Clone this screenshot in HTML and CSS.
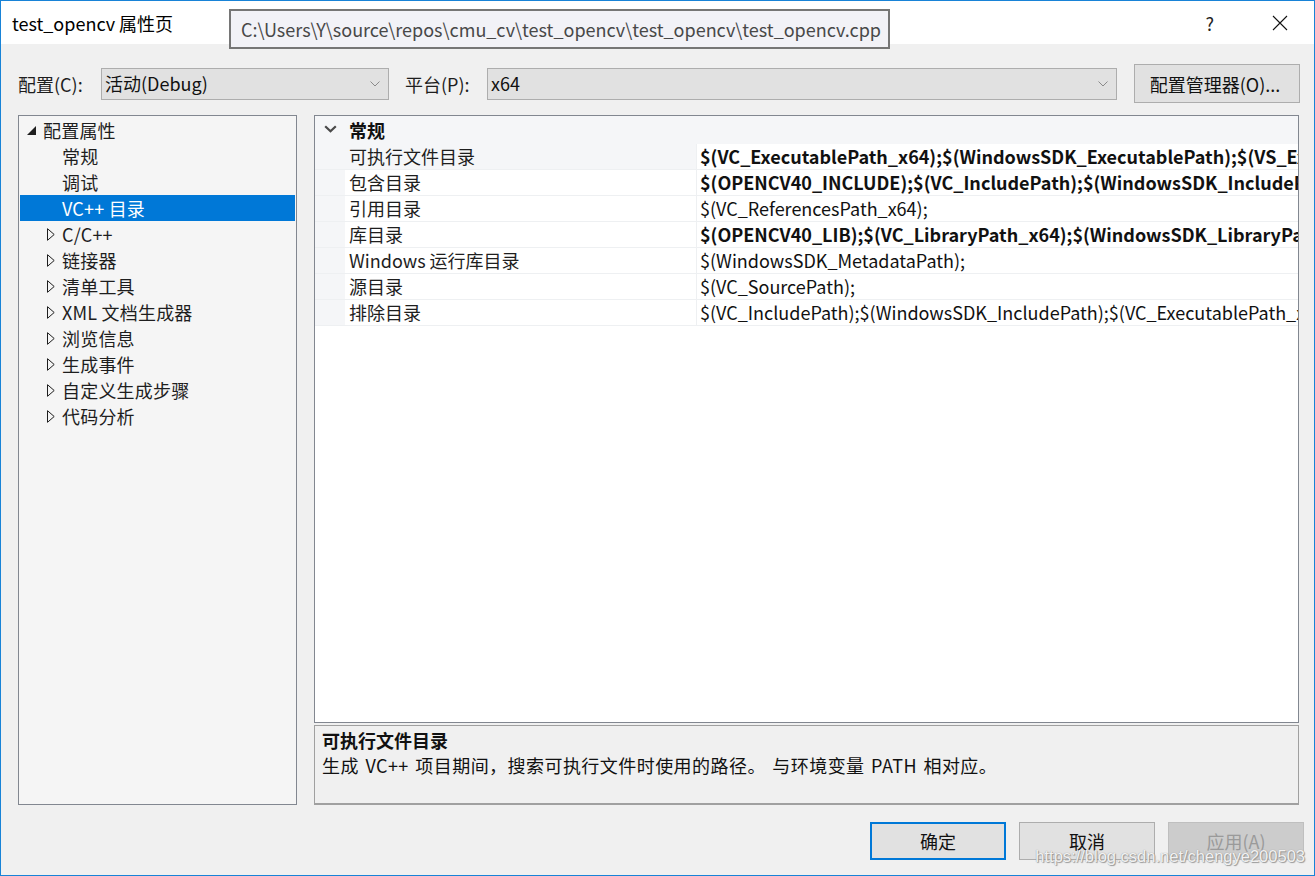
FILE: index.html
```html
<!DOCTYPE html>
<html lang="zh-CN">
<head>
<meta charset="utf-8">
<title>test_opencv 属性页</title>
<link rel="stylesheet" href="styles.css">
</head>
<body>
<div class="window">
  <div class="titlebar">
    <span class="title">test_opencv 属性页</span>
    <div class="tb-buttons">
      <span class="help">?</span>
      <svg class="close" width="16" height="16" viewBox="0 0 16 16"><path d="M1 1L15 15M15 1L1 15" stroke="#111" stroke-width="1.1" fill="none"/></svg>
    </div>
  </div>
  <div class="tooltip">C:\Users\Y\source\repos\cmu_cv\test_opencv\test_opencv\test_opencv.cpp</div>

  <div class="toolbar">
    <label class="lbl lbl-config">配置(C):</label>
    <div class="select sel-config"><span>活动(Debug)</span>
      <svg class="chev" width="10" height="6" viewBox="0 0 10 6"><path d="M0.5 0.5L5 5L9.5 0.5" stroke="#8a8a8a" stroke-width="1" fill="none"/></svg>
    </div>
    <label class="lbl lbl-platform">平台(P):</label>
    <div class="select sel-platform"><span>x64</span>
      <svg class="chev" width="10" height="6" viewBox="0 0 10 6"><path d="M0.5 0.5L5 5L9.5 0.5" stroke="#8a8a8a" stroke-width="1" fill="none"/></svg>
    </div>
    <button class="btn btn-manager">配置管理器(O)...</button>
  </div>

  <div class="main">
    <div class="tree">
      <div class="node root"><svg class="tri-open" width="9" height="9" viewBox="0 0 9 9"><path d="M9 0V9H0Z" fill="#1e1e1e"/></svg><span>配置属性</span></div>
      <div class="node leaf"><span>常规</span></div>
      <div class="node leaf"><span>调试</span></div>
      <div class="node leaf selected"><span>VC++ 目录</span></div>
      <div class="node branch"><svg class="tri" width="8" height="13" viewBox="0 0 8 13"><path d="M0.5 0.7V12.3L7.2 6.5Z" fill="none" stroke="#1e1e1e" stroke-width="1"/></svg><span>C/C++</span></div>
      <div class="node branch"><svg class="tri" width="8" height="13" viewBox="0 0 8 13"><path d="M0.5 0.7V12.3L7.2 6.5Z" fill="none" stroke="#1e1e1e" stroke-width="1"/></svg><span>链接器</span></div>
      <div class="node branch"><svg class="tri" width="8" height="13" viewBox="0 0 8 13"><path d="M0.5 0.7V12.3L7.2 6.5Z" fill="none" stroke="#1e1e1e" stroke-width="1"/></svg><span>清单工具</span></div>
      <div class="node branch"><svg class="tri" width="8" height="13" viewBox="0 0 8 13"><path d="M0.5 0.7V12.3L7.2 6.5Z" fill="none" stroke="#1e1e1e" stroke-width="1"/></svg><span>XML 文档生成器</span></div>
      <div class="node branch"><svg class="tri" width="8" height="13" viewBox="0 0 8 13"><path d="M0.5 0.7V12.3L7.2 6.5Z" fill="none" stroke="#1e1e1e" stroke-width="1"/></svg><span>浏览信息</span></div>
      <div class="node branch"><svg class="tri" width="8" height="13" viewBox="0 0 8 13"><path d="M0.5 0.7V12.3L7.2 6.5Z" fill="none" stroke="#1e1e1e" stroke-width="1"/></svg><span>生成事件</span></div>
      <div class="node branch"><svg class="tri" width="8" height="13" viewBox="0 0 8 13"><path d="M0.5 0.7V12.3L7.2 6.5Z" fill="none" stroke="#1e1e1e" stroke-width="1"/></svg><span>自定义生成步骤</span></div>
      <div class="node branch"><svg class="tri" width="8" height="13" viewBox="0 0 8 13"><path d="M0.5 0.7V12.3L7.2 6.5Z" fill="none" stroke="#1e1e1e" stroke-width="1"/></svg><span>代码分析</span></div>
    </div>

    <div class="right">
      <div class="grid">
        <div class="cat">
          <div class="margin"><svg width="13" height="8" viewBox="0 0 13 8"><path d="M1.2 1.2L6.5 6.3L11.8 1.2" stroke="#4a4a4a" stroke-width="2.2" fill="none"/></svg></div>
          <div class="cat-name">常规</div>
        </div>
        <div class="row active">
          <div class="margin"></div>
          <div class="name">可执行文件目录</div>
          <div class="value bold">$(VC_ExecutablePath_x64);$(WindowsSDK_ExecutablePath);$(VS_ExecutablePath);$(MSBuild_ExecutablePath);$(FxCopDir);$(PATH);</div>
        </div>
        <div class="row">
          <div class="margin"></div>
          <div class="name">包含目录</div>
          <div class="value bold">$(OPENCV40_INCLUDE);$(VC_IncludePath);$(WindowsSDK_IncludePath);</div>
        </div>
        <div class="row">
          <div class="margin"></div>
          <div class="name">引用目录</div>
          <div class="value">$(VC_ReferencesPath_x64);</div>
        </div>
        <div class="row">
          <div class="margin"></div>
          <div class="name">库目录</div>
          <div class="value bold">$(OPENCV40_LIB);$(VC_LibraryPath_x64);$(WindowsSDK_LibraryPath_x64);$(NETFXKitsDir)Lib\um\x64</div>
        </div>
        <div class="row">
          <div class="margin"></div>
          <div class="name">Windows 运行库目录</div>
          <div class="value">$(WindowsSDK_MetadataPath);</div>
        </div>
        <div class="row">
          <div class="margin"></div>
          <div class="name">源目录</div>
          <div class="value">$(VC_SourcePath);</div>
        </div>
        <div class="row">
          <div class="margin"></div>
          <div class="name">排除目录</div>
          <div class="value">$(VC_IncludePath);$(WindowsSDK_IncludePath);$(VC_ExecutablePath_x64);$(VC_LibraryPath_x64)</div>
        </div>
      </div>
      <div class="desc">
        <div class="desc-title">可执行文件目录</div>
        <div class="desc-text">生成 VC++ 项目期间，搜索可执行文件时使用的路径。 与环境变量 PATH 相对应。</div>
      </div>
    </div>
  </div>

  <div class="footer">
    <button class="btn dlg default">确定</button>
    <button class="btn dlg">取消</button>
    <button class="btn dlg disabled">应用(A)</button>
    <span class="watermark">https://blog.csdn.net/chengye200503</span>
  </div>
</div>
</body>
</html>
```

FILE: styles.css
```css
* { box-sizing: border-box; }

html, body {
  margin: 0;
  padding: 0;
  background: #f0f0f0;
}

body {
  font-family: "Noto Sans CJK SC", "Noto Sans", sans-serif;
  font-size: 18px;
  color: #1e1e1e;
}

.window {
  position: relative;
  width: 1315px;
  height: 876px;
  border: 1px solid #1883d7;
  background: #f0f0f0;
  display: flex;
  flex-direction: column;
  overflow: hidden;
}

/* title bar */
.titlebar {
  height: 43px;
  flex: none;
  background: #ffffff;
  display: flex;
  align-items: center;
  padding-left: 11px;
}
.title {
  font-size: 18px;
  color: #000;
}
.tb-buttons {
  margin-left: auto;
  display: flex;
  align-items: center;
  padding-right: 26px;
}
.help {
  font-size: 18px;
  color: #222;
  margin-right: 58px;
}
.close { display: block; }

.tooltip {
  position: absolute;
  left: 228px;
  top: 8px;
  width: 661px;
  height: 40px;
  border: 2px solid #767676;
  background: #f2f2f7;
  color: #484848;
  font-size: 18px;
  line-height: 36px;
  padding-left: 10px;
  white-space: nowrap;
  z-index: 5;
}

/* toolbar */
.toolbar {
  flex: none;
  display: flex;
  align-items: center;
  padding: 20px 16px 0 17px;
  height: 59px;
}
.lbl {
  flex: none;
  font-size: 18px;
  color: #1e1e1e;
}
.lbl-config { width: 83px; }
.lbl-platform { width: 82px; margin-left: 16px; }
.select {
  flex: none;
  height: 32px;
  background: #e1e1e1;
  border: 1px solid #adadad;
  display: flex;
  align-items: center;
  padding: 0 8px 0 3px;
  font-size: 18px;
  color: #111;
}
.select span { padding-bottom: 1px; }
.select .chev { margin-left: auto; }
.sel-config { width: 288px; }
.sel-platform { width: 630px; }

.btn {
  font-family: "Noto Sans CJK SC", "Noto Sans", sans-serif;
  font-size: 18px;
  color: #111;
  background: #e1e1e1;
  border: 1px solid #adadad;
  padding: 0;
  margin: 0;
}
.btn-manager {
  flex: none;
  width: 166px;
  height: 39px;
  margin-left: 17px;
  padding-right: 4px;
}

/* main */
.main {
  flex: none;
  display: flex;
  gap: 17px;
  padding: 12px 16px 0 17px;
  height: 702px;
}
.tree {
  flex: none;
  width: 279px;
  height: 690px;
  border: 1px solid #828790;
  background: #f5f5f5;
  padding: 1px 1px;
}
.node {
  height: 26px;
  display: flex;
  align-items: center;
  position: relative;
  font-size: 18px;
  color: #1e1e1e;
  white-space: nowrap;
}
.node span { position: absolute; left: 42px; top: 0; line-height: 26px; letter-spacing: 0.2px; }
.node.root span { left: 23px; }
.node .tri-open { position: absolute; left: 7px; top: 9px; }
.node .tri { position: absolute; left: 27px; top: 7px; }
.node.selected {
  background: #0078d7;
  color: #ffffff;
}

.right {
  flex: none;
  width: 985px;
  display: flex;
  flex-direction: column;
  gap: 2px;
}
.grid {
  height: 608px;
  border: 1px solid #828790;
  background: #ffffff;
  overflow: hidden;
}
.cat {
  height: 28px;
  display: flex;
  align-items: center;
  background: #f5f6f8;
}
.margin {
  flex: none;
  width: 30px;
  height: 100%;
  display: flex;
  align-items: center;
  justify-content: center;
  background: #f5f6f8;
  padding-left: 1px;
}
.cat .margin svg { position: relative; top: -1px; }
.cat-name {
  font-weight: bold;
  font-size: 18px;
  padding-left: 4px;
  color: #111;
}
.row {
  height: 26px;
  display: flex;
  align-items: stretch;
  border-bottom: 1px solid #eef0f2;
  white-space: nowrap;
}
.name {
  flex: none;
  width: 352px;
  padding-left: 4px;
  font-size: 18px;
  line-height: 25px;
  color: #1e1e1e;
  border-right: 1px solid #eef0f2;
  overflow: hidden;
}
.row.active .name { background: #f5f6f8; }
.value {
  flex: 1;
  min-width: 0;
  padding-left: 3px;
  font-size: 18px;
  line-height: 25px;
  overflow: hidden;
  color: #111;
}
.value.bold { font-weight: bold; }

.desc {
  height: 80px;
  border: 1px solid #a0a0a0;
  border-bottom-width: 2px;
  background: #f0f0f0;
  padding: 2px 7px;
  font-size: 18px;
  line-height: 25px;
  color: #111;
}
.desc-title { font-weight: bold; }
.desc-text { letter-spacing: 0.45px; word-spacing: 2px; }

/* footer */
.footer {
  flex: none;
  position: relative;
  display: flex;
  justify-content: flex-end;
  gap: 13px;
  padding: 17px 10px 0 0;
}
.dlg {
  width: 136px;
  height: 38px;
}
.dlg.default { border: 2px solid #0078d7; }
.dlg.disabled {
  background: #cccccc;
  border-color: #bfbfbf;
  color: #9a9a9a;
}
.watermark {
  position: absolute;
  right: 9px;
  top: 42px;
  font-family: "Liberation Sans", Arial, sans-serif;
  font-size: 16.5px;
  color: rgba(255, 255, 255, 0.9);
  text-shadow: 0 0 1px #888, 1px 1px 1px #999;
  white-space: nowrap;
}
```
